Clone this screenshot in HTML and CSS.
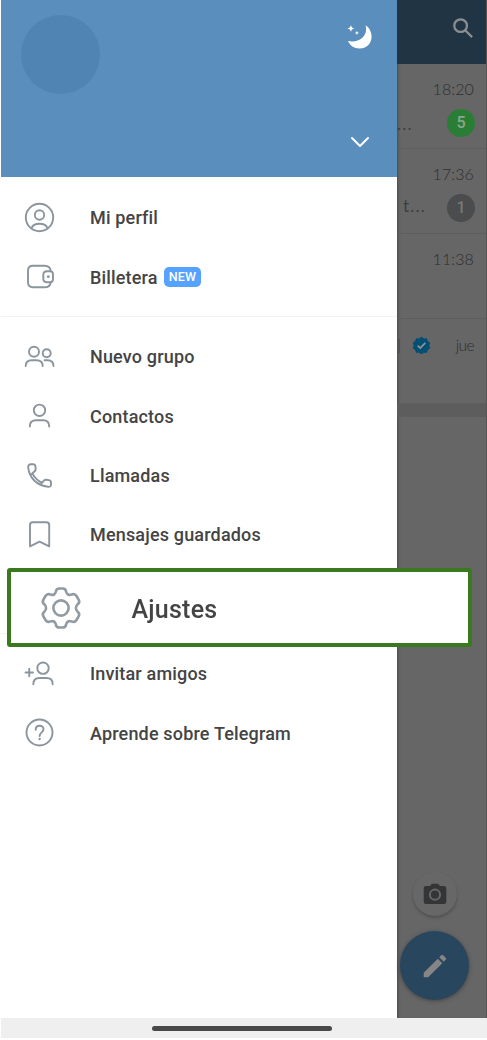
FILE: index.html
```html
<!DOCTYPE html>
<html lang="es">
<head>
<meta charset="utf-8">
<title>Telegram</title>
<link rel="stylesheet" href="styles.css">
</head>
<body>
<div class="phone">
  <div class="screen">
    <aside class="drawer">
      <header class="profile">
        <div class="avatar"></div>
        <div class="profile-actions">
          <svg class="moon" viewBox="0 0 26 26"><path d="M18.600 1.200C28 7 26.500 24.500 12.500 24.500C7 24.500 2.800 21.500 1 17C12 19.500 21.500 12 18.600 1.200Z"/><path d="M3.900 1.200L4.900 3.600L7.300 4.500L4.900 5.400L3.900 7.800L2.900 5.400L.5 4.500L2.900 3.600Z"/><path d="M9.900 6.800L10.500 8.300L12 8.900L10.500 9.500L9.900 11L9.300 9.500L7.800 8.900L9.300 8.300Z"/></svg>
          <svg class="chevron" viewBox="0 0 20 12"><path d="M2 2L10 10L18 2"/></svg>
        </div>
      </header>
      <nav class="menu">
        <section class="group">
          <a class="item"><svg class="icon" viewBox="-.5 0 32 32"><circle cx="16" cy="15.500" r="13.700"/><circle cx="16" cy="13" r="4.700"/><path d="M8.200 26C9.200 22.500 12 21.700 16 21.700S22.800 22.500 23.800 26"/></svg><span>Mi perfil</span></a>
          <a class="item"><svg class="icon" viewBox="-.5 0 32 32"><path d="M27.200 10C26.800 6 25 4.700 21 4.700H9.500Q4.500 4.700 4.500 9.700V21.300Q4.500 26.300 9.500 26.300H21C25 26.300 26.800 25 27.200 21.300"/><path d="M23.500 10.300H26.500Q29.500 10.300 29.500 13.300V18.200Q29.500 21.200 26.500 21.200H23.500Q19.800 21.200 19.800 17.500V14Q19.800 10.300 23.500 10.300Z"/><circle class="dot" cx="24.800" cy="15.700" r="1.400"/></svg><span>Billetera</span><b class="new">NEW</b></a>
        </section>
        <section class="group">
          <a class="item"><svg class="icon" viewBox="-.5 0 32 32"><circle cx="10.500" cy="10.700" r="5"/><circle cx="23.200" cy="12.200" r="4"/><path d="M2.200 25C2.200 20.500 5 19.300 8 19.300H13C16.500 19.300 19.200 20.500 19.200 25M21 19.300H24C28 19.300 30 21 30 25"/></svg><span>Nuevo grupo</span></a>
          <a class="item"><svg class="icon" viewBox="-.5 0 32 32"><circle cx="16" cy="10.300" r="5.700"/><path d="M6.300 26.500C6.300 21.500 9 20.300 12.500 20.300H19.500C23 20.300 25.700 21.500 25.700 26.500"/></svg><span>Contactos</span></a>
          <a class="item"><svg class="icon" viewBox="-.5 0 32 32"><path d="M7.500 4.300H9.500Q11.700 4.300 11.900 6.500L12.200 8.500Q12.400 10.300 11 11.500L8.900 13.300C11 17.500 14 20.500 18.400 22.900L20.200 20.800Q21.400 19.500 23.200 19.800L25.200 20.100Q27.500 20.400 27.500 22.600V24.300Q27.500 27.200 24.500 26.800C13.500 25.500 6 18.500 4.700 7.400Q4.400 4.300 7.500 4.300ZM8.900 13.300L7.300 14.900M18.400 22.900L17 24.500"/></svg><span>Llamadas</span></a>
          <a class="item"><svg class="icon" viewBox="-.5 0 32 32"><path d="M6.500 6Q6.500 3.300 9.200 3.300H23Q25.700 3.300 25.700 6V27.400L16.100 22.600L6.500 27.400Z"/></svg><span>Mensajes guardados</span></a>
          <div class="item"></div>
        </section>
        <section class="group">
          <a class="item"><svg class="icon" viewBox="-.5 0 32 32"><circle cx="19.500" cy="10.200" r="5.700"/><path d="M9.800 26.200C9.800 21.200 12.500 20 16 20H23C26.500 20 29.200 21.200 29.200 26.200M2 14.500H9.500M5.750 10.750V18.250"/></svg><span>Invitar amigos</span></a>
          <a class="item"><svg class="icon" viewBox="-.5 0 32 32"><circle cx="16" cy="15.500" r="13"/><path d="M12.200 12.800C12.200 7.500 20 7.500 20 12.300C20 15.300 16.100 15.500 16.100 19"/><circle class="dot" cx="16.100" cy="22" r="1.200"/></svg><span>Aprende sobre Telegram</span></a>
        </section>
      </nav>
    </aside>
    <main class="chats">
      <div class="topbar"><svg class="search" viewBox="0 0 24 24"><circle cx="9" cy="9" r="6.600"/><path d="M14 14L21 21"/></svg></div>
      <div class="chat"><time>18:20</time><div class="line"><span>...</span><b class="count unread">5</b></div></div>
      <div class="chat"><time>17:36</time><div class="line"><span class="tail">t...</span><b class="count">1</b></div></div>
      <div class="chat"><time>11:38</time></div>
      <div class="chat last"><div class="title"><i class="cut"></i><svg class="verified" viewBox="0 0 20 20"><path class="seal" d="M10 .7L12.600 2.500L15.700 2.300L16.700 5.300L19.200 7.200L18.200 10L19.200 12.800L16.700 14.700L15.700 17.700L12.600 17.500L10 19.300L7.400 17.500L4.300 17.700L3.300 14.700L.8 12.800L1.800 10L.8 7.200L3.300 5.300L4.300 2.300L7.400 2.500Z"/><path class="tick" d="M6 10.200L8.700 12.800L14 7.300"/></svg><time class="day">jue</time></div></div>
      <div class="band"></div>
      <div class="fabs">
        <div class="camera"><svg viewBox="0 0 24 22"><path class="body" d="M3 3H7L9 .7H15L17 3H21Q23.300 3 23.300 5.300V18.700Q23.300 21 21 21H3Q.7 21 .7 18.700V5.300Q.7 3 3 3Z"/><circle cx="12" cy="11.700" r="5.100"/></svg></div>
        <div class="compose"><svg viewBox="0 0 24 24"><path d="M.7 18.800L14.800 4.700L19.300 9.200L5.200 23.300H.7ZM16.200 3.300L18.200 1.300Q19.200.4 20.200 1.300L22.700 3.800Q23.600 4.800 22.700 5.800L20.700 7.800Z"/></svg></div>
      </div>
    </main>
  </div>
  <footer class="navbar"><div class="handle"></div></footer>
  <div class="callout">
    <svg class="gear" viewBox="0 0 42 42"><path d="M15.800 4.800Q16.300 1.500 19.300 1.500H22.700Q25.700 1.500 26.200 4.800C26.800 7.400 28.800 8.500 31.300 7.600Q34.800 6.200 36.500 9L38.600 12.600Q40.200 15.300 37.700 17.300C35.300 19.500 35.300 22.500 37.700 24.700Q40.200 26.700 38.600 29.400L36.500 33Q34.800 35.800 31.300 34.400C28.800 33.500 26.800 34.600 26.200 37.200Q25.700 40.500 22.700 40.500H19.300Q16.300 40.500 15.800 37.200C15.200 34.600 13.200 33.500 10.700 34.400Q7.200 35.800 5.500 33L3.400 29.400Q1.800 26.700 4.300 24.700C6.700 22.500 6.700 19.500 4.300 17.300Q1.800 15.300 3.400 12.600L5.500 9Q7.200 6.200 10.700 7.600C13.200 8.500 15.200 7.400 15.800 4.800Z"/><circle cx="21" cy="21" r="7.600"/></svg>
    <span>Ajustes</span>
  </div>
</div>
</body>
</html>
```
FILE: styles.css
```css
* { box-sizing: border-box; }
body { margin: 0; background: #fff; font-family: Roboto, "Liberation Sans", sans-serif; }
svg { display: block; flex: none; }

.phone { position: relative; width: 487px; height: 1040px; padding-left: 1px; overflow: hidden; }
.screen { display: flex; height: 1018px; }

.drawer { width: 396px; flex: none; background: #fff; }
.profile { display: flex; justify-content: space-between; height: 177.400px; padding: 15px 24px 0 20px; background: #5a8fbd; }
.avatar { width: 79px; height: 79px; border-radius: 50%; background: #5084b3; }
.profile-actions { display: flex; flex-direction: column; align-items: center; padding-top: 9px; }
.moon { width: 26px; height: 26px; fill: #fff; }
.chevron { width: 20px; height: 12px; margin-top: 86px; fill: none; stroke: #fff; stroke-width: 2; stroke-linecap: round; stroke-linejoin: round; }

.menu { padding-top: 10.800px; }
.group + .group { margin-top: 9px; padding-top: 10.500px; border-top: 1px solid #f2f2f2; }
.item { display: flex; align-items: center; height: 59.300px; padding-left: 22px; color: #444; font-size: 18px; font-weight: 500; letter-spacing: .17px; white-space: nowrap; }
.icon { width: 32px; height: 32px; margin-right: 35px; fill: none; stroke: #8b959e; stroke-width: 1.900; stroke-linecap: round; stroke-linejoin: round; }
.icon .dot { fill: #8b959e; stroke: none; }
.new { width: 37px; height: 20px; margin-left: 6.300px; border-radius: 5px; background: #56a2ff; color: #fff; font-size: 12.500px; font-weight: 500; line-height: 20.500px; text-align: center; letter-spacing: .2px; }

.chats { display: flex; flex-direction: column; width: 90px; background: #666; border-right: 1px solid #555; box-shadow: inset 3px 0 3px -2px #4a4a4a; }
.topbar { height: 64px; padding: 17px 0 0 55px; background: #213443; }
.search { width: 23px; height: 23px; fill: none; stroke: #8b8f92; stroke-width: 2.300; }
.chat { height: 85px; padding: 13px 12px 0 0; border-bottom: 1px solid #5d5d5d; }
.chat time { display: block; color: #2d2e2f; font-family: Lato, sans-serif; font-size: 16px; font-weight: 300; line-height: 23px; text-align: right; letter-spacing: .1px; }
.chat .day { font-size: 15.500px; letter-spacing: -.6px; }
.line { display: flex; align-items: center; justify-content: space-between; height: 28px; margin: 9px -1px 0 0; color: #3d3d3d; font-family: Lato, sans-serif; font-size: 17px; letter-spacing: 1.200px; }
.line .tail { padding: 0 0 6px 6px; }
.count { width: 28px; height: 28px; border-radius: 50%; background: #4b4c4e; color: #77797b; font: 500 16px/28px Roboto, sans-serif; text-align: center; letter-spacing: 0; }
.unread { background: #2a7d35; color: #8ba58e; }
.chat.last { height: 84px; border-bottom: 0; padding-top: 15px; }
.title { display: flex; align-items: center; }
.title time { margin-left: auto; }
.cut { width: 2px; height: 14px; margin: 0 12px 0 1px; background: #535353; }
.verified { width: 19px; height: 19px; }
.seal { fill: #034e73; }
.tick { fill: none; stroke: #8d9599; stroke-width: 1.800; }
.band { height: 14px; background: #5d5d5d; }

.fabs { display: flex; flex-direction: column; align-items: center; gap: 15px; margin-top: auto; padding: 0 14px 18px 0; }
.camera, .compose { display: flex; align-items: center; justify-content: center; border-radius: 50%; }
.camera { width: 44px; height: 44px; background: #676767; box-shadow: 0 2px 3px #505050; }
.camera svg { width: 24px; height: 22px; }
.camera .body { fill: #343536; }
.camera circle { fill: none; stroke: #676767; stroke-width: 2; }
.compose { width: 69px; height: 69px; background: #28465e; box-shadow: 0 1px 4px #444; }
.compose svg { width: 24px; height: 24px; fill: #858585; }

.navbar { display: flex; justify-content: center; height: 20px; padding: 8px 4px 0 0; background: #efefef; }
.handle { width: 180px; height: 5px; border-radius: 3px; background: #494949; }

.callout { position: absolute; left: 7px; top: 568px; display: flex; align-items: center; width: 465px; height: 79px; padding-left: 28.500px; border: 4px solid #3a791e; border-radius: 3px; background: #fff; color: #444; font-size: 25px; font-weight: 500; letter-spacing: .25px; }
.callout span { margin: 3px 0 0 50px; filter: blur(.6px); }
.gear { width: 42px; height: 42px; fill: none; stroke: #929aa2; stroke-width: 2.600; filter: blur(.5px); }
```
